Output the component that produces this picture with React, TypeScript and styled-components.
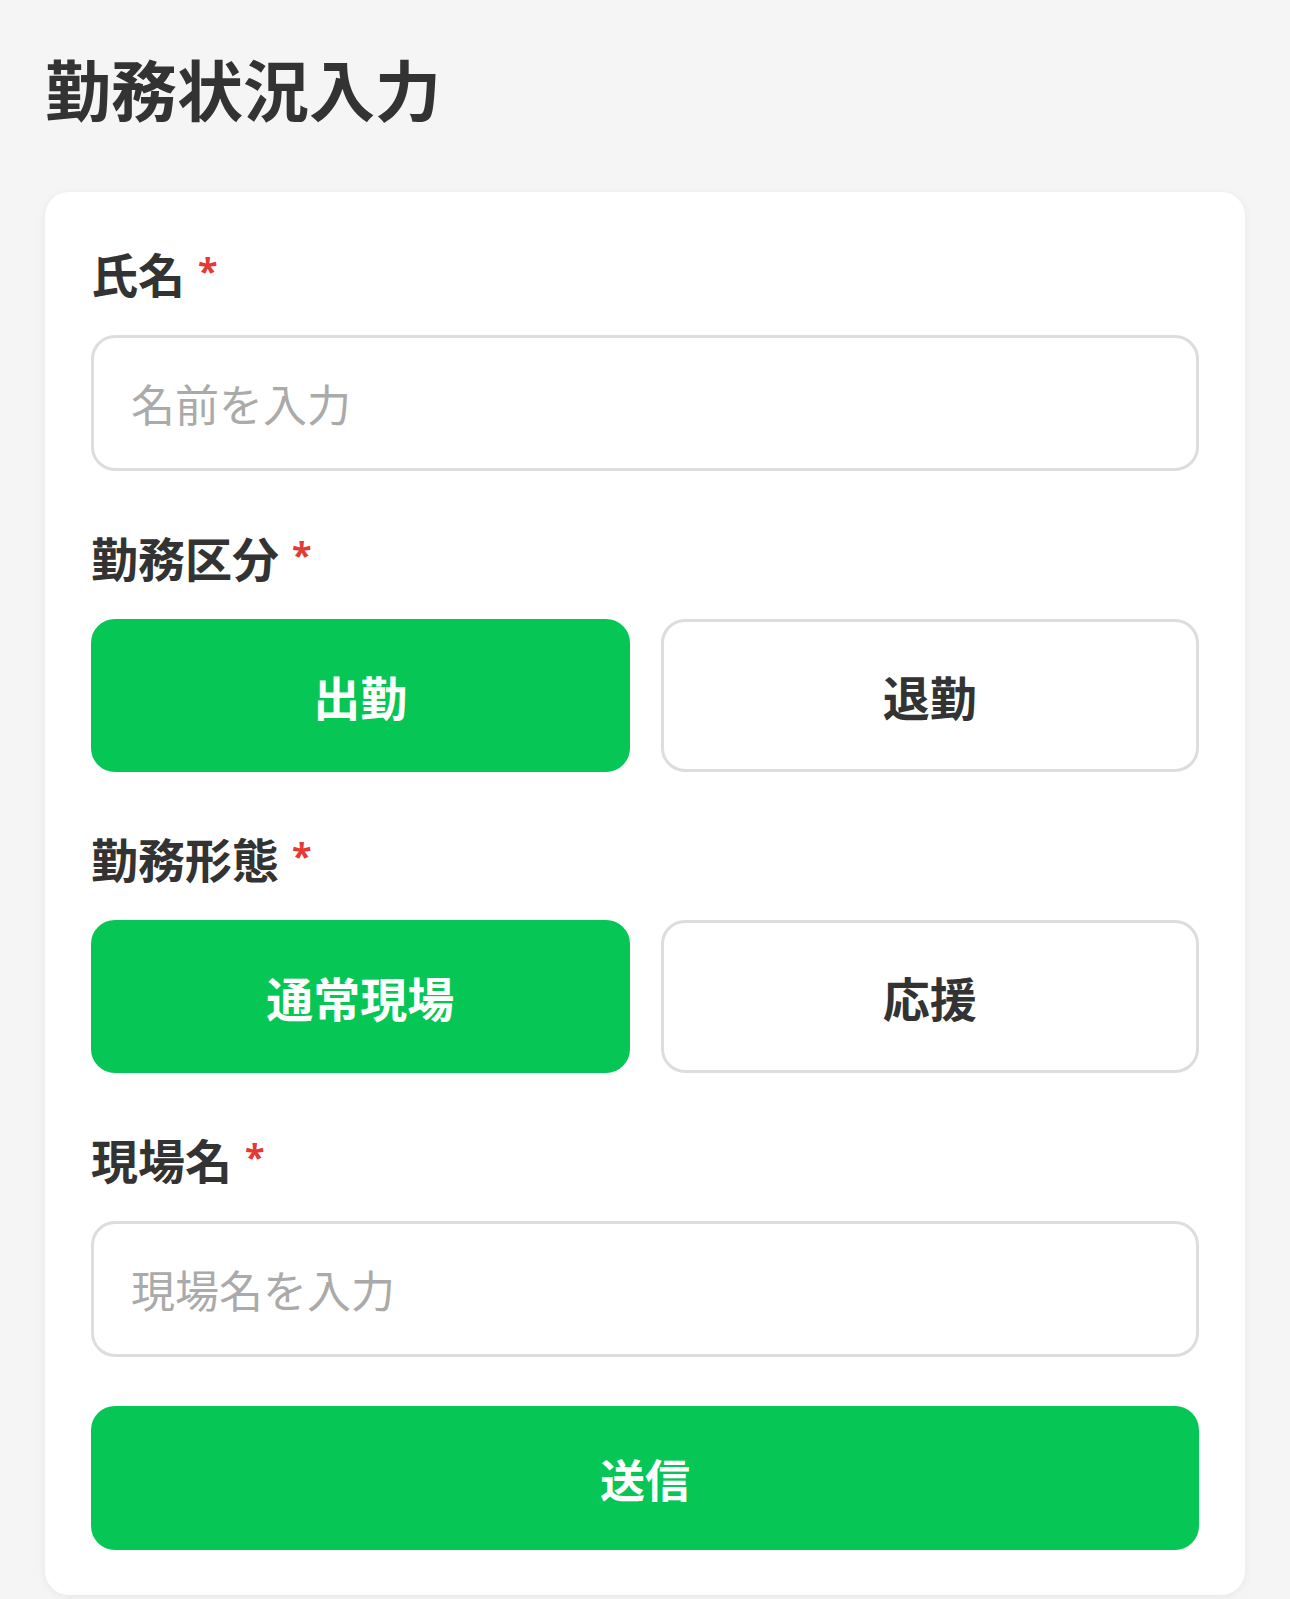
import React, { useState } from "react";
import styled, { createGlobalStyle } from "styled-components";

const GlobalStyle = createGlobalStyle`
  * { box-sizing: border-box; }
  html, body {
    margin: 0;
    padding: 0;
    background: #f5f5f5;
    font-family: "Noto Sans CJK JP", "Noto Sans", sans-serif;
    color: #333333;
  }
`;

const Page = styled.div`
  padding: 42px 45px 4px 45px;
  min-height: 1599px;
`;

const Title = styled.h1`
  margin: 0 0 60px 0;
  font-size: 66px;
  line-height: 90px;
  font-weight: 700;
  color: #333333;
`;

const Card = styled.form`
  background: #ffffff;
  border-radius: 24px;
  box-shadow: 0 2px 10px rgba(0, 0, 0, 0.06);
  padding: 49px 46px 45px 46px;
  display: flex;
  flex-direction: column;
`;

const Field = styled.div`
  display: flex;
  flex-direction: column;
  & + & {
    margin-top: 54px;
  }
`;

const Label = styled.label`
  font-size: 47px;
  line-height: 64px;
  font-weight: 700;
  color: #333333;
  margin-bottom: 30px;
  display: flex;
  align-items: flex-start;
`;

const Required = styled.span`
  color: #e53935;
  font-size: 36px;
  line-height: 60px;
  margin-left: 13px;
  font-family: "Noto Sans", sans-serif;
  font-weight: 700;
`;

const TextInput = styled.input`
  width: 100%;
  height: 136px;
  border: 3px solid #dddddd;
  border-radius: 24px;
  padding: 0 37px;
  font-family: "Noto Sans CJK JP", "Noto Sans", sans-serif;
  font-size: 44px;
  color: #333333;
  background: #ffffff;
  outline: none;
  &::placeholder {
    color: #aaaaaa;
  }
`;

const Choices = styled.div`
  display: grid;
  grid-template-columns: 1fr 1fr;
  gap: 31px;
`;

const Choice = styled.button<{ $active: boolean }>`
  height: 153px;
  border-radius: 24px;
  border: 3px solid ${(p) => (p.$active ? "#06c755" : "#dddddd")};
  background: ${(p) => (p.$active ? "#06c755" : "#ffffff")};
  color: ${(p) => (p.$active ? "#ffffff" : "#333333")};
  font-family: "Noto Sans CJK JP", "Noto Sans", sans-serif;
  font-size: 47px;
  font-weight: 700;
  cursor: pointer;
  padding: 0;
`;

const Submit = styled.button`
  margin-top: 49px;
  height: 144px;
  border: none;
  border-radius: 24px;
  background: #06c755;
  color: #ffffff;
  font-family: "Noto Sans CJK JP", "Noto Sans", sans-serif;
  font-size: 45px;
  font-weight: 700;
  cursor: pointer;
`;

export default function App() {
  const [kubun, setKubun] = useState("出勤");
  const [keitai, setKeitai] = useState("通常現場");
  return (
    <>
      <GlobalStyle />
      <Page>
        <Title>勤務状況入力</Title>
        <Card onSubmit={(e) => e.preventDefault()}>
          <Field>
            <Label>
              氏名<Required>*</Required>
            </Label>
            <TextInput placeholder="名前を入力" />
          </Field>
          <Field>
            <Label>
              勤務区分<Required>*</Required>
            </Label>
            <Choices>
              {["出勤", "退勤"].map((v) => (
                <Choice key={v} type="button" $active={kubun === v} onClick={() => setKubun(v)}>
                  {v}
                </Choice>
              ))}
            </Choices>
          </Field>
          <Field>
            <Label>
              勤務形態<Required>*</Required>
            </Label>
            <Choices>
              {["通常現場", "応援"].map((v) => (
                <Choice key={v} type="button" $active={keitai === v} onClick={() => setKeitai(v)}>
                  {v}
                </Choice>
              ))}
            </Choices>
          </Field>
          <Field>
            <Label>
              現場名<Required>*</Required>
            </Label>
            <TextInput placeholder="現場名を入力" />
          </Field>
          <Submit type="submit">送信</Submit>
        </Card>
      </Page>
    </>
  );
}
